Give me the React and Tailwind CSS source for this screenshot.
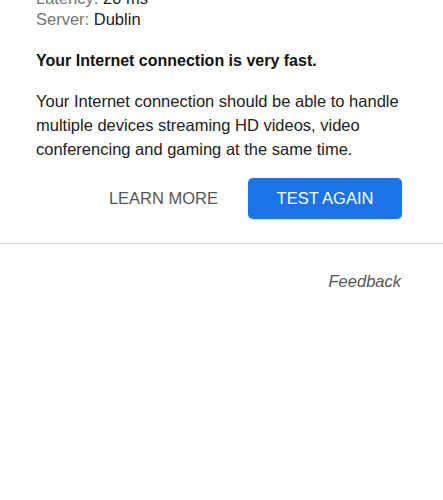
export default function App() {
  return (
    <div className="min-h-screen bg-white overflow-hidden" style={{ fontFamily: '"Liberation Sans", Arial, sans-serif' }}>
      <div className="px-[36px] -mt-[12px] text-[16.5px] leading-[21px] text-[#212121]">
        <div>
          <span className="text-[#757575]">Latency: </span>20 ms
        </div>
        <div>
          <span className="text-[#757575]">Server: </span>Dublin
        </div>
        <p className="mt-[20px] text-[16px] font-bold text-[#111]">Your Internet connection is very fast.</p>
        <p className="mt-[18px] leading-[24px]">
          Your Internet connection should be able to handle multiple devices streaming HD videos, video
          conferencing and gaming at the same time.
        </p>
      </div>
      <div className="flex justify-end items-center gap-[18px] pr-[41px] mt-[17px]">
        <button className="text-[16.5px] text-[#555] px-[12px] h-[41px]">LEARN MORE</button>
        <button className="w-[154px] h-[41px] rounded-[5px] bg-[#1a73e8] text-white text-[16.5px] shadow-sm">
          TEST AGAIN
        </button>
      </div>
      <div className="mt-[24px] border-t border-[#dcdcdc]" />
      <div className="flex justify-end pr-[42px] mt-[25px]">
        <span className="italic text-[16.5px] text-[#555]">Feedback</span>
      </div>
    </div>
  );
}
